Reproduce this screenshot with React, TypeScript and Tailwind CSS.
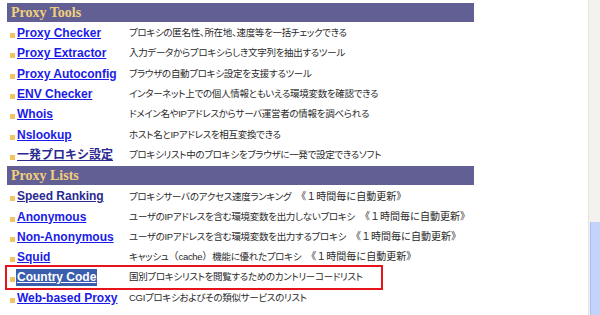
import React from "react";

type Row = { name: string; desc: React.ReactNode; visited?: boolean; selected?: boolean };

const Wide = ({ children, className = "" }: { children: React.ReactNode; className?: string }) => (
  <span className={`[font-feature-settings:normal] tracking-[0px] text-[10px] ${className}`}>{children}</span>
);

const hourly = <Wide className="ml-[5px]">《１時間毎に自動更新》</Wide>;

const tools: Row[] = [
  { name: "Proxy Checker", desc: "プロキシの匿名性、所在地、速度等を一括チェックできる" },
  { name: "Proxy Extractor", desc: "入力データからプロキシらしき文字列を抽出するツール" },
  { name: "Proxy Autoconfig", desc: "ブラウザの自動プロキシ設定を支援するツール" },
  { name: "ENV Checker", desc: "インターネット上での個人情報ともいえる環境変数を確認できる" },
  { name: "Whois", desc: "ドメイン名やIPアドレスからサーバ運営者の情報を調べられる" },
  { name: "Nslookup", desc: "ホスト名とIPアドレスを相互変換できる" },
  { name: "一発プロキシ設定", desc: "プロキシリスト中のプロキシをブラウザに一発で設定できるソフト", visited: true },
];

const lists: Row[] = [
  { name: "Speed Ranking", desc: <>プロキシサーバのアクセス速度ランキング{hourly}</>, visited: true },
  { name: "Anonymous", desc: <>ユーザのIPアドレスを含む環境変数を出力しないプロキシ{hourly}</> },
  { name: "Non-Anonymous", desc: <>ユーザのIPアドレスを含む環境変数を出力するプロキシ{hourly}</> },
  {
    name: "Squid",
    desc: (
      <>
        キャッシュ<Wide>（</Wide>cache<Wide>）</Wide>機能に優れたプロキシ{hourly}
      </>
    ),
  },
  { name: "Country Code", desc: "国別プロキシリストを閲覧するためのカントリーコードリスト", selected: true },
  { name: "Web-based Proxy", desc: "CGIプロキシおよびその類似サービスのリスト" },
];

function Header({ title }: { title: string }) {
  return (
    <div className="h-[19px] bg-[#625f95] flex items-center pl-[4px]">
      <span className="text-[14px] font-bold text-[#f2d07a] leading-none [font-family:'Liberation_Serif',serif]">
        {title}
      </span>
    </div>
  );
}

function Item({ r }: { r: Row }) {
  const color = r.visited ? "text-[#2a2a90] decoration-[#2a2a90]" : "text-[#1b1be8] decoration-[#1b1be8]";
  return (
    <div className="h-[20.3px] flex items-center">
      <div className="w-[122px] flex items-center">
        <span className="w-[5px] h-[5px] bg-[#f2c464] mt-[5px] mr-[1px] ml-[3px] shrink-0" />
        {r.selected ? (
          <span className="bg-[#3b5dad] text-white underline text-[12px] font-bold leading-[17px] px-[1px] [font-family:'Liberation_Sans',sans-serif] whitespace-nowrap">
            {r.name}
          </span>
        ) : (
          <span
            className={`${color} underline text-[12px] font-bold leading-none px-[1px] [font-family:'Liberation_Sans','Noto_Sans_CJK_JP',sans-serif] whitespace-nowrap`}
          >
            {r.name}
          </span>
        )}
      </div>
      <span className="text-[9.5px] text-[#2a2a2a] whitespace-nowrap [font-family:'Liberation_Sans','Noto_Sans_CJK_JP',sans-serif] [font-feature-settings:'palt'] tracking-[-0.3px]">
        {r.desc}
      </span>
    </div>
  );
}

export default function App() {
  return (
    <div className="w-[600px] h-[315px] bg-white relative overflow-hidden flex">
      <div className="flex-1">
        <div className="ml-[7px] w-[467px] mt-[3px]">
          <Header title="Proxy Tools" />
          <div className="pt-[1px]">
            {tools.map((r) => (
              <Item key={r.name} r={r} />
            ))}
          </div>
          <div className="mt-[1px]">
            <Header title="Proxy Lists" />
          </div>
          <div className="pt-[1px]">
            {lists.map((r) =>
              r.selected ? (
                <div key={r.name} className="relative">
                  <Item r={r} />
                  <div className="absolute left-[-2px] top-[-2px] w-[378px] h-[25px] border-2 border-[#e8141c] pointer-events-none" />
                </div>
              ) : (
                <Item key={r.name} r={r} />
              )
            )}
          </div>
        </div>
      </div>
      <div className="w-[12px] h-full bg-[#f3f2ef] border-l border-[#e6e4df] flex flex-col">
        <div className="h-[222px]" />
        <div className="flex-1 bg-[#c3d3f9] border-l border-[#a9bff2] ml-[1px]" />
      </div>
    </div>
  );
}
